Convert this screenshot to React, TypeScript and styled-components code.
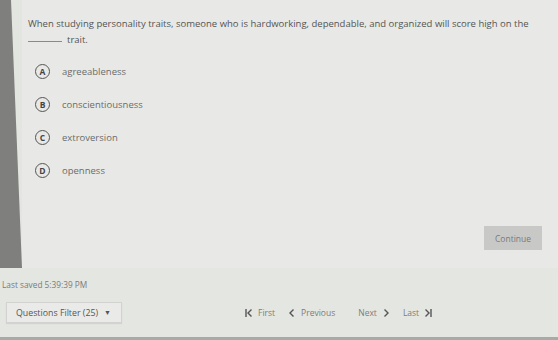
import styled, { createGlobalStyle } from "styled-components";

const GlobalStyle = createGlobalStyle`
    html, body {
        margin: 0;
        padding: 0;
        background: #e3e5e1;
    }
    * {
        box-sizing: border-box;
    }
`;

const Page = styled.div`
    width: 558px;
    height: 340px;
    display: flex;
    flex-direction: column;
    font-family: "Open Sans", "Liberation Sans", sans-serif;
    overflow: hidden;
`;

const Top = styled.div`
    height: 268px;
    display: flex;
`;

const SideStrip = styled.div`
    width: 22px;
    flex-shrink: 0;
    background: #7f807e;
    clip-path: polygon(0 0, 11px 0, 100% 100%, 0 100%);
`;

const Panel = styled.section`
    flex: 1;
    min-width: 0;
    display: flex;
    flex-direction: column;
    padding: 16px 16px 18px 6px;
    background: #e8e9e6;
`;

const Question = styled.p`
    margin: 0;
    font-size: 9.5px;
    line-height: 16px;
    color: #545454;
`;

const Blank = styled.span`
    display: inline-block;
    width: 34px;
    margin-right: 5px;
    border-bottom: 1px solid #8a8a8a;
    vertical-align: 1px;
`;

const Options = styled.ul`
    list-style: none;
    margin: 14px 0 0;
    padding: 0 0 0 7px;
    display: flex;
    flex-direction: column;
    gap: 15px;
`;

const Option = styled.li`
    height: 18px;
    display: flex;
    align-items: center;
    gap: 12px;
`;

const Letter = styled.span`
    width: 15px;
    height: 15px;
    border-radius: 50%;
    border: 1.4px solid #555;
    display: flex;
    align-items: center;
    justify-content: center;
    font-size: 8.5px;
    font-weight: 700;
    color: #444;
`;

const Label = styled.span`
    font-size: 9.5px;
    color: #6b6b6b;
`;

const ContinueButton = styled.button`
    margin-top: auto;
    align-self: flex-end;
    width: 58px;
    height: 24px;
    border: none;
    background: #c8c9c7;
    color: #7a7a7a;
    font-family: inherit;
    font-size: 8.5px;
`;

const Footer = styled.footer`
    flex: 1;
    padding: 11px 0 0 2px;
    background: #e4e6e2;
    border-bottom: 3px solid #a8aaa6;
`;

const Saved = styled.div`
    font-size: 8.3px;
    line-height: 12px;
    color: #7a7a7a;
`;

const Bar = styled.div`
    margin-top: 11px;
    display: flex;
    align-items: center;
`;

const FilterButton = styled.button`
    margin-left: 4px;
    width: 116px;
    height: 21px;
    padding: 0 0 0 9px;
    display: flex;
    align-items: center;
    gap: 6px;
    background: #eaebe9;
    border: 1px solid #d2d3d0;
    box-shadow: 0 1px 1px rgba(0, 0, 0, 0.08);
    font-family: inherit;
    font-size: 8.8px;
    color: #555;
`;

const Caret = styled.span`
    font-size: 7px;
    color: #555;
`;

const Pager = styled.nav`
    margin-left: 123px;
    display: flex;
    align-items: center;
    gap: 13px;
`;

const PageLink = styled.span<{ $wide?: boolean }>`
    display: flex;
    align-items: center;
    gap: 5px;
    margin-right: ${(p) => (p.$wide ? "10px" : "0")};
    font-size: 8.5px;
    color: #7d7d7d;
`;

const Icon = ({ d }: { d: string }) => (
    <svg width="8" height="10" viewBox="0 0 8 10" fill="none" stroke="#555" strokeWidth="1.4">
        <path d={d} />
    </svg>
);

const options = [
    { key: "A", text: "agreeableness" },
    { key: "B", text: "conscientiousness" },
    { key: "C", text: "extroversion" },
    { key: "D", text: "openness" },
];

function App() {
    return (
        <Page>
            <GlobalStyle />
            <Top>
                <SideStrip />
                <Panel>
                    <Question>
                        When studying personality traits, someone who is hardworking, dependable, and organized will score high on the{" "}
                        <Blank />trait.
                    </Question>
                    <Options>
                        {options.map((o) => (
                            <Option key={o.key}>
                                <Letter>{o.key}</Letter>
                                <Label>{o.text}</Label>
                            </Option>
                        ))}
                    </Options>
                    <ContinueButton>Continue</ContinueButton>
                </Panel>
            </Top>
            <Footer>
                <Saved>Last saved 5:39:39 PM</Saved>
                <Bar>
                    <FilterButton>
                        Questions Filter (25) <Caret>▼</Caret>
                    </FilterButton>
                    <Pager>
                        <PageLink>
                            <Icon d="M1 1v8M6.5 1.5L3 5l3.5 3.5" />
                            First
                        </PageLink>
                        <PageLink $wide>
                            <Icon d="M5.5 1.5L2 5l3.5 3.5" />
                            Previous
                        </PageLink>
                        <PageLink>
                            Next
                            <Icon d="M2.5 1.5L6 5 2.5 8.5" />
                        </PageLink>
                        <PageLink>
                            Last
                            <Icon d="M1.5 1.5L5 5 1.5 8.5M7 1v8" />
                        </PageLink>
                    </Pager>
                </Bar>
            </Footer>
        </Page>
    );
}

export default App;
